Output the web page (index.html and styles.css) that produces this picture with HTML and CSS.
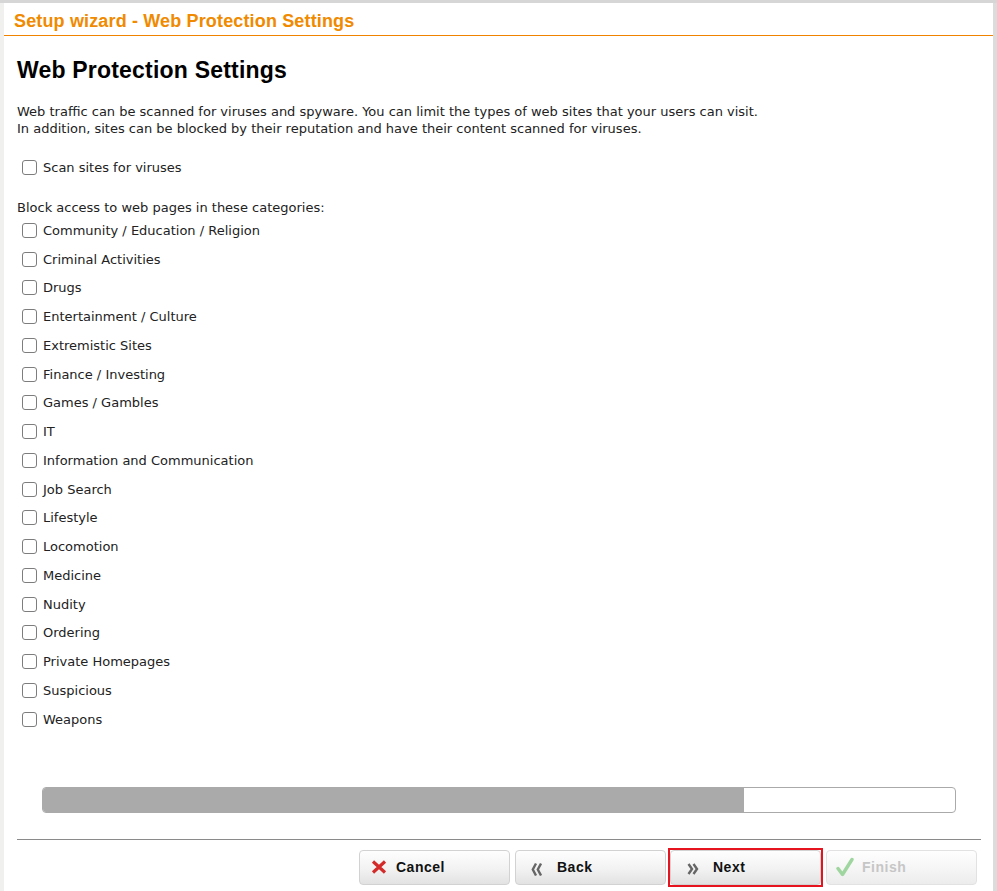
FILE: index.html
```html
<!DOCTYPE html>
<html lang="en">
<head>
<meta charset="utf-8">
<title>Setup wizard - Web Protection Settings</title>
<link rel="stylesheet" href="styles.css">
</head>
<body>
<div class="shell">
  <div class="lstrip"></div>
  <main class="main">
    <header class="wiz-title">Setup wizard - Web Protection Settings</header>
    <section class="content">
      <h2 class="heading">Web Protection Settings</h2>
      <p class="intro">Web traffic can be scanned for viruses and spyware. You can limit the types of web sites that your users can visit.<br>In addition, sites can be blocked by their reputation and have their content scanned for viruses.</p>
      <label class="check scan"><input type="checkbox"><span>Scan sites for viruses</span></label>
      <div class="block-label">Block access to web pages in these categories:</div>
      <ul class="cats">
        <li><label class="check"><input type="checkbox"><span>Community / Education / Religion</span></label></li>
        <li><label class="check"><input type="checkbox"><span>Criminal Activities</span></label></li>
        <li><label class="check"><input type="checkbox"><span>Drugs</span></label></li>
        <li><label class="check"><input type="checkbox"><span>Entertainment / Culture</span></label></li>
        <li><label class="check"><input type="checkbox"><span>Extremistic Sites</span></label></li>
        <li><label class="check"><input type="checkbox"><span>Finance / Investing</span></label></li>
        <li><label class="check"><input type="checkbox"><span>Games / Gambles</span></label></li>
        <li><label class="check"><input type="checkbox"><span>IT</span></label></li>
        <li><label class="check"><input type="checkbox"><span>Information and Communication</span></label></li>
        <li><label class="check"><input type="checkbox"><span>Job Search</span></label></li>
        <li><label class="check"><input type="checkbox"><span>Lifestyle</span></label></li>
        <li><label class="check"><input type="checkbox"><span>Locomotion</span></label></li>
        <li><label class="check"><input type="checkbox"><span>Medicine</span></label></li>
        <li><label class="check"><input type="checkbox"><span>Nudity</span></label></li>
        <li><label class="check"><input type="checkbox"><span>Ordering</span></label></li>
        <li><label class="check"><input type="checkbox"><span>Private Homepages</span></label></li>
        <li><label class="check"><input type="checkbox"><span>Suspicious</span></label></li>
        <li><label class="check"><input type="checkbox"><span>Weapons</span></label></li>
      </ul>
      <div class="progress"><div class="progress-fill" style="width:76.9%"></div></div>
    </section>
    <div class="sep"></div>
    <div class="buttons">
      <button class="btn btn-cancel" type="button">
        <svg class="ico" width="16" height="14" viewBox="0 0 16 14"><path d="M2 1.5 L14 12.5 M14 1.5 L2 12.5" stroke="#d42a2a" stroke-width="3.2" fill="none"/></svg>
        <span class="lbl">Cancel</span>
      </button>
      <button class="btn btn-back" type="button">
        <svg class="ico" width="11" height="14" viewBox="0 0 11 14"><path d="M5 1.5 L1.8 7.5 L5 13.5 M10 1.5 L6.8 7.5 L10 13.5" fill="none" stroke="#666" stroke-width="2.4"/></svg>
        <span class="lbl">Back</span>
      </button>
      <div class="next-wrap">
        <button class="btn btn-next" type="button">
          <svg class="ico" width="12" height="12" viewBox="0 0 12 12"><path d="M1.5 1 L5 6 L1.5 11 M6.5 1 L10 6 L6.5 11" fill="none" stroke="#666" stroke-width="2.4"/></svg>
          <span class="lbl">Next</span>
        </button>
      </div>
      <button class="btn btn-finish" type="button" disabled>
        <svg class="ico" width="18" height="20" viewBox="0 0 18 20"><path d="M2 11.5 L6.5 17.5 L16 2.5" fill="none" stroke="#9fd59f" stroke-width="3.4" stroke-linecap="round" stroke-linejoin="round"/></svg>
        <span class="lbl">Finish</span>
      </button>
    </div>
  </main>
  <div class="rstrip"></div>
</div>
</body>
</html>
```

FILE: styles.css
```css
* { box-sizing: border-box; }
html, body { margin: 0; padding: 0; }
body {
  font-family: "DejaVu Sans", "Liberation Sans", sans-serif;
  font-size: 13px;
  color: #1e1e1e;
  background: #fff;
}
.shell {
  display: flex;
  height: 891px;
  border-top: 3px solid #d6d6d6;
  overflow: hidden;
}
.lstrip { width: 4px; background: #f0f0ee; flex: none; }
.rstrip { width: 4px; background: #dcdcdc; flex: none; }
.main {
  flex: 1;
  background: #fff;
  display: flex;
  flex-direction: column;
  min-width: 0;
}
.wiz-title {
  padding: 8px 10px 4px;
  line-height: 20px;
  font-family: "Liberation Sans", Arial, sans-serif;
  font-size: 18px;
  letter-spacing: 0.15px;
  font-weight: bold;
  color: #f08a00;
  border-bottom: 1px solid #f08300;
}
.content { padding-left: 13px; }
.heading {
  margin: 21px 0 0;
  font-family: "Liberation Sans", Arial, sans-serif;
  font-size: 23px;
  letter-spacing: 0.2px;
  line-height: 26px;
  font-weight: bold;
  color: #000;
}
.intro {
  margin: 20px 0 0;
  line-height: 17px;
  color: #222;
}
.check {
  display: flex;
  align-items: center;
  height: 29px;
  padding-left: 5px;
  color: #222;
}
.check input {
  appearance: none;
  -webkit-appearance: none;
  width: 15px;
  height: 15px;
  margin: 0 6px 0 0;
  border: 1px solid #7d7d7d;
  border-radius: 3px;
  background: #fff;
  flex: none;
}
.scan { margin-top: 16px; }
.block-label {
  margin-top: 17px;
  line-height: 17px;
  color: #222;
}
.cats { list-style: none; margin: 0; padding: 0; }
.cats li { height: 28.76px; }
.cats .check { height: 28.76px; }
.progress {
  margin: 53px 0 0 25px;
  width: 914px;
  height: 26px;
  border: 1px solid #aaa;
  border-radius: 4px;
  overflow: hidden;
  background: #fff;
}
.progress-fill { height: 100%; background: #aaa; }
.sep {
  margin: 26px 12px 0 13px;
  height: 1px;
  background: #8a8a8a;
}
.buttons {
  display: flex;
  justify-content: flex-end;
  align-items: flex-start;
  gap: 5px;
  margin-top: 10px;
  padding-right: 16px;
}
.btn {
  width: 151px;
  height: 35px;
  display: flex;
  align-items: center;
  padding: 0;
  border: 1px solid #d2d2d2;
  border-radius: 4px;
  background: linear-gradient(#fefefe, #f2f2f2 55%, #e2e2e2);
  font-family: "Liberation Sans", Arial, sans-serif;
  font-size: 14px;
  font-weight: bold;
  letter-spacing: 0.5px;
  color: #111;
  cursor: pointer;
}
.ico { flex: none; display: block; }
.btn-cancel .ico { margin-left: 11px; }
.btn-cancel .lbl { margin-left: 9px; }
.btn-back .ico { margin-left: 15px; margin-top: 3px; }
.btn-back .lbl { margin-left: 15px; }
.next-wrap {
  border: 2px solid #e5141e;
  margin: -2px -2px 0 -3px;
  display: flex;
}
.btn-next .ico { margin-left: 16px; margin-top: 3px; }
.btn-next .lbl { margin-left: 14px; }
.btn-finish {
  color: #c6c6c6;
  border-color: #e2e2e2;
  background: linear-gradient(#fefefe, #f5f5f5 55%, #ececec);
  cursor: default;
}
.btn-finish .ico { margin-left: 9px; }
.btn-finish .lbl { margin-left: 8px; }
```
